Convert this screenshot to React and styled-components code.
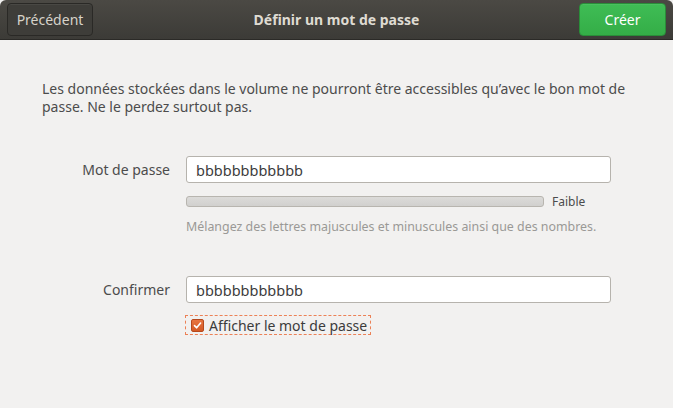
import React from "react";
import styled, { createGlobalStyle } from "styled-components";

const Global = createGlobalStyle`
  html, body { margin: 0; padding: 0; background: #f2f1f0; }
  body { font-family: "Noto Sans", "DejaVu Sans", sans-serif; }
  * { box-sizing: border-box; }
`;

const Window = styled.div`
  width: 673px;
  height: 408px;
  background: #f2f1f0;
  display: flex;
  flex-direction: column;
  overflow: hidden;
`;

const HeaderBar = styled.header`
  height: 40px;
  flex: none;
  display: grid;
  grid-template-columns: 1fr auto 1fr;
  align-items: center;
  padding: 0 7px 0 7px;
  background: linear-gradient(#4b4944, #3c3b37);
  border-bottom: 1px solid #2b2a27;
  border-radius: 6px 6px 0 0;
`;

const Title = styled.h1`
  margin: 0;
  font-size: 14px;
  font-weight: 700;
  color: #dfdbd2;
  text-align: center;
`;

const HeadButton = styled.button`
  justify-self: ${(p) => (p.$end ? "end" : "start")};
  height: 33px;
  width: ${(p) => p.$w}px;
  border-radius: 4px;
  font-family: inherit;
  font-size: 14px;
  padding: 0;
  color: ${(p) => (p.$primary ? "#ffffff" : "#d6d2c9")};
  background: ${(p) =>
    p.$primary ? "linear-gradient(#3fbd55, #34ad47)" : "#3e3d39"};
  border: 1px solid ${(p) => (p.$primary ? "#2a8d39" : "#2a2926")};
  box-shadow: inset 0 1px rgba(255, 255, 255, 0.06);
`;

const Body = styled.main`
  padding: 40px 42px 0 42px;
  display: flex;
  flex-direction: column;
  color: #4c4c4c;
`;

const Intro = styled.p`
  margin: 0;
  font-size: 14px;
  line-height: 18px;
  color: #4c4c4c;
`;

const Form = styled.div`
  margin-top: 40px;
  display: grid;
  grid-template-columns: 128px 1fr;
  column-gap: 16px;
  margin-right: 20px;
`;

const Label = styled.label`
  font-size: 14px;
  text-align: right;
  align-self: center;
  margin-top: ${(p) => p.$mt || 0}px;
  color: #4c4c4c;
`;

const Field = styled.div`
  height: 27px;
  background: #ffffff;
  border: 1px solid #b6b3ad;
  border-radius: 3px;
  padding: 0 9px;
  display: flex;
  align-items: center;
  font-size: 14.5px;
  color: #3c3c3c;
  margin-top: ${(p) => p.$mt || 0}px;
`;

const Cell = styled.div`
  grid-column: 2;
`;

const MeterRow = styled.div`
  margin-top: 13px;
  height: 11px;
  display: flex;
  align-items: center;
  gap: 8px;
  font-size: 12px;
  color: #4c4c4c;
`;

const Meter = styled.div`
  width: 358px;
  height: 11px;
  border: 1px solid #b8b5af;
  border-radius: 3px;
  background: linear-gradient(#dcdbd9, #d1d0ce);
`;

const Hint = styled.div`
  margin-top: 11px;
  font-size: 12.4px;
  line-height: 17px;
  color: #9a9996;
`;

const CheckRow = styled.div`
  margin-top: 12px;
  display: inline-flex;
  align-items: center;
  gap: 5px;
  height: 20px;
  padding: 0 3px 0 5px;
  border: 1px dashed #ec8156;
  font-size: 14px;
  color: #3c3c3c;
  margin-left: -1px;
`;

const Box = styled.span`
  width: 13px;
  height: 13px;
  border-radius: 2px;
  background: linear-gradient(#e8743f, #d45a26);
  border: 1px solid #b5491d;
  display: flex;
  align-items: center;
  justify-content: center;
`;

function Check() {
  return (
    <Box>
      <svg width="9" height="9" viewBox="0 0 9 9">
        <path d="M1.5 4.6 L3.6 6.8 L7.6 2" stroke="#fff" strokeWidth="1.6" fill="none" strokeLinecap="round" strokeLinejoin="round" />
      </svg>
    </Box>
  );
}

export default function App() {
  return (
    <Window>
      <Global />
      <HeaderBar>
        <HeadButton $w={86}>Précédent</HeadButton>
        <Title>Définir un mot de passe</Title>
        <HeadButton $w={87} $end $primary>Créer</HeadButton>
      </HeaderBar>
      <Body>
        <Intro>
          Les données stockées dans le volume ne pourront être accessibles qu’avec le bon mot de
          passe. Ne le perdez surtout pas.
        </Intro>
        <Form>
          <Label>Mot de passe</Label>
          <Field>bbbbbbbbbbbb</Field>
          <Cell>
            <MeterRow>
              <Meter />
              <span>Faible</span>
            </MeterRow>
            <Hint>Mélangez des lettres majuscules et minuscules ainsi que des nombres.</Hint>
          </Cell>
          <Label $mt={41}>Confirmer</Label>
          <Field $mt={41}>bbbbbbbbbbbb</Field>
          <Cell>
            <CheckRow>
              <Check />
              <span>Afficher le mot de passe</span>
            </CheckRow>
          </Cell>
        </Form>
      </Body>
    </Window>
  );
}
